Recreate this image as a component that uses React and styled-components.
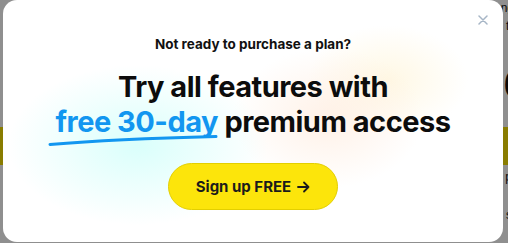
import React from "react";
import styled, { createGlobalStyle } from "styled-components";

const Global = createGlobalStyle`
  html, body { margin: 0; padding: 0; }
  body {
    width: 508px;
    height: 243px;
    overflow: hidden;
    font-family: Inter, "Noto Sans", Arial, sans-serif;
    background: #f4f4f4;
  }
`;

const Page = styled.div`
  position: relative;
  width: 508px;
  height: 243px;
  overflow: hidden;
  display: flex;
  flex-direction: column;
  background: #ffffff;
`;

const PageTop = styled.div`
  height: 127px;
  display: flex;
  flex-direction: column;
  align-items: flex-end;
  font-family: "Liberation Sans", Arial, sans-serif;
  color: #111;
`;

const PageSmall = styled.div`
  font-size: 12px;
  line-height: 16px;
  margin-right: ${(p) => p.$mr || 0}px;
  margin-top: ${(p) => p.$mt || 0}px;
`;

const PageBig = styled.div`
  font-size: 40px;
  font-weight: 700;
  line-height: 40px;
  margin-right: -18px;
  margin-top: 30px;
`;

const Band = styled.div`
  height: 38px;
  background: #f5dd00;
`;

const PageBottom = styled.div`
  flex: 1;
  display: flex;
  flex-direction: column;
  align-items: flex-end;
  font-family: "Liberation Sans", Arial, sans-serif;
  color: #111;
`;

const Overlay = styled.div`
  position: absolute;
  inset: 0;
  background: rgba(0, 0, 0, 0.44);
`;

const Modal = styled.div`
  position: absolute;
  left: 3px;
  top: 0;
  width: 500px;
  height: 242px;
  border-radius: 14px;
  overflow: hidden;
  box-sizing: border-box;
  display: flex;
  flex-direction: column;
  align-items: center;
  padding-top: 36px;
  background:
    radial-gradient(ellipse 130px 80px at 135px 145px, rgba(205, 255, 250, 0.75), rgba(205, 255, 250, 0) 100%),
    radial-gradient(ellipse 95px 70px at 325px 118px, rgba(255, 232, 215, 0.6), rgba(255, 232, 215, 0) 100%),
    radial-gradient(ellipse 80px 55px at 385px 80px, rgba(255, 243, 210, 0.6), rgba(255, 243, 210, 0) 100%),
    #ffffff;
`;

const Close = styled.button`
  position: absolute;
  top: 12px;
  right: 12px;
  width: 16px;
  height: 16px;
  padding: 0;
  border: 0;
  background: transparent;
  display: flex;
  align-items: center;
  justify-content: center;
  cursor: pointer;
`;

const Eyebrow = styled.p`
  margin: 0;
  font-size: 13.5px;
  font-weight: 700;
  line-height: 16px;
  color: #111111;
`;

const Heading = styled.h2`
  margin: 17px 0 0;
  font-size: 29px;
  font-weight: 700;
  line-height: 35px;
  letter-spacing: -0.5px;
  text-align: center;
  color: #0c0c0c;
`;

const Highlight = styled.span`
  position: relative;
  color: #1296f0;
`;

const Swoosh = styled.svg`
  position: absolute;
  left: -8px;
  bottom: -7px;
  width: 172px;
  height: 12px;
  overflow: visible;
`;

const Cta = styled.button`
  margin-top: 24px;
  width: 170px;
  height: 47px;
  border-radius: 24px;
  border: 1.5px solid #e3cf00;
  background: #fce50b;
  font-family: inherit;
  font-size: 15px;
  font-weight: 700;
  color: #1b1b1b;
  display: flex;
  align-items: center;
  justify-content: center;
  gap: 6px;
  cursor: pointer;
`;

export default function App() {
  return (
    <>
      <Global />
      <Page>
        <PageTop>
          <PageSmall $mr={-6}>ng</PageSmall>
          <PageSmall $mr={-4} $mt={2}>ti</PageSmall>
          <PageBig>6</PageBig>
        </PageTop>
        <Band />
        <PageBottom>
          <PageSmall $mr={-4} $mt={4}>p</PageSmall>
          <PageSmall $mr={-4} $mt={22}>s</PageSmall>
        </PageBottom>
        <Overlay />
        <Modal>
          <Close aria-label="Close">
            <svg width="10" height="10" viewBox="0 0 10 10">
              <path d="M1 1L9 9M9 1L1 9" stroke="#a7b6c6" strokeWidth="1.5" strokeLinecap="round" />
            </svg>
          </Close>
          <Eyebrow>Not ready to purchase a plan?</Eyebrow>
          <Heading>
            Try all features with
            <br />
            <Highlight>
              free 30-day
              <Swoosh viewBox="0 0 172 12" preserveAspectRatio="none">
                <path d="M2 10.5 C 50 6.5, 110 4, 168 2.5" fill="none" stroke="#1296f0" strokeWidth="3" strokeLinecap="round" />
              </Swoosh>
            </Highlight>{" "}
            premium access
          </Heading>
          <Cta>
            Sign up FREE
            <svg width="13" height="12" viewBox="0 0 13 12">
              <path d="M1 6H11.5M7 1.5L11.5 6L7 10.5" fill="none" stroke="#1b1b1b" strokeWidth="1.8" strokeLinecap="round" strokeLinejoin="round" />
            </svg>
          </Cta>
        </Modal>
      </Page>
    </>
  );
}
